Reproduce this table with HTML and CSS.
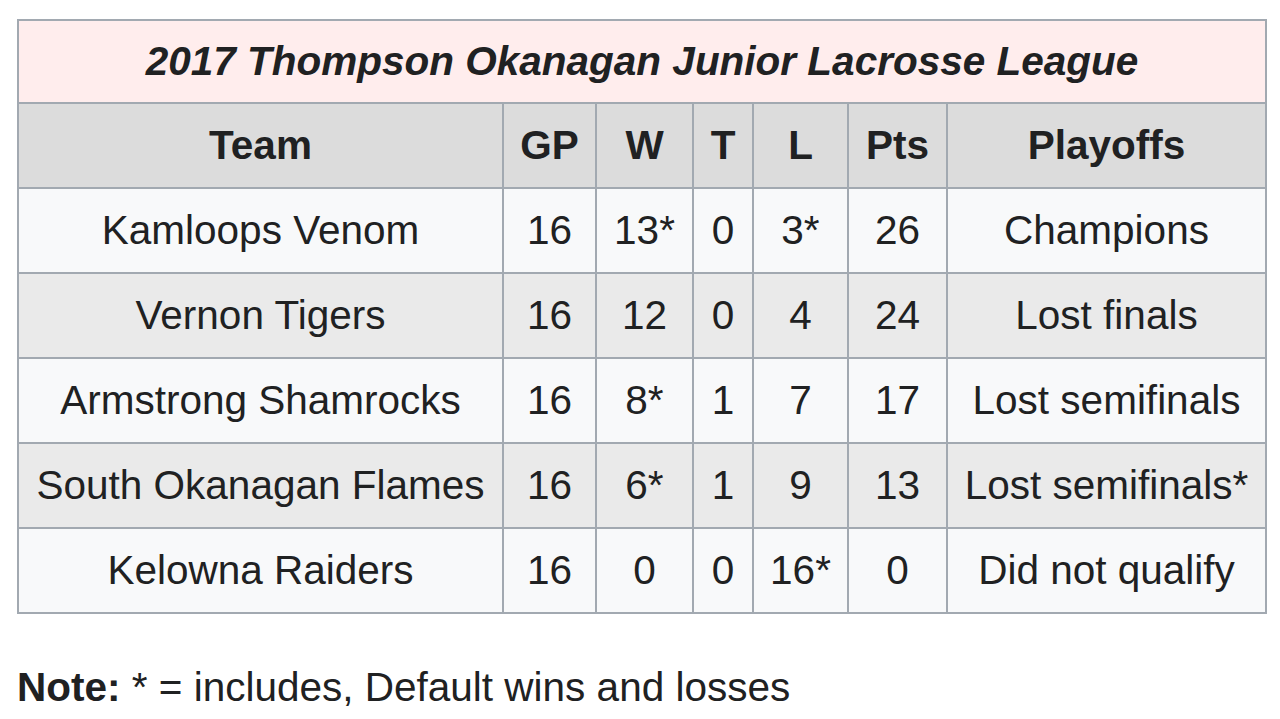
FILE: index.html
```html
<!DOCTYPE html>
<html lang="en">
<head>
  <meta charset="UTF-8" />
  <title>2017 Thompson Okanagan Junior Lacrosse League</title>
  <link rel="stylesheet" href="styles.css">
</head>
<body>
  <div class="page">
    <table class="standings">
      <colgroup>
        <col class="c-team">
        <col class="c-gp">
        <col class="c-w">
        <col class="c-t">
        <col class="c-l">
        <col class="c-pts">
        <col class="c-play">
      </colgroup>
      <tr class="title-row">
        <th colspan="7"><i>2017 Thompson Okanagan Junior Lacrosse League</i></th>
      </tr>
      <tr class="head-row">
        <th>Team</th>
        <th>GP</th>
        <th>W</th>
        <th>T</th>
        <th>L</th>
        <th>Pts</th>
        <th>Playoffs</th>
      </tr>
      <tr>
        <td>Kamloops Venom</td><td>16</td><td>13*</td><td>0</td><td>3*</td><td>26</td><td>Champions</td>
      </tr>
      <tr>
        <td>Vernon Tigers</td><td>16</td><td>12</td><td>0</td><td>4</td><td>24</td><td>Lost finals</td>
      </tr>
      <tr>
        <td>Armstrong Shamrocks</td><td>16</td><td>8*</td><td>1</td><td>7</td><td>17</td><td>Lost semifinals</td>
      </tr>
      <tr>
        <td>South Okanagan Flames</td><td>16</td><td>6*</td><td>1</td><td>9</td><td>13</td><td>Lost semifinals*</td>
      </tr>
      <tr>
        <td>Kelowna Raiders</td><td>16</td><td>0</td><td>0</td><td>16*</td><td>0</td><td>Did not qualify</td>
      </tr>
    </table>
    <p class="note"><b>Note:</b> * = includes, Default wins and losses</p>
  </div>
</body>
</html>
```

FILE: styles.css
```css
* { box-sizing: border-box; margin: 0; padding: 0; }
body {
  font-family: "Liberation Sans", Arial, sans-serif;
  color: #202122;
  background: #fff;
}

.page {
  padding: 19px 15px 0 17px;
}

.standings {
  table-layout: fixed;
  width: 1248px;
  border-collapse: collapse;
  font-size: 40.5px;
  text-align: center;
}

.c-team { width: 485px; }
.c-gp { width: 93px; }
.c-w { width: 97px; }
.c-t { width: 60px; }
.c-l { width: 95px; }
.c-pts { width: 99px; }
.c-play { width: 319px; }

.standings th,
.standings td {
  border: 2px solid #a2a9b1;
  height: 85px;
  padding: 0;
  white-space: nowrap;
}

.title-row th {
  background: #ffeded;
  height: 83px;
}

.head-row th {
  background: #dcdcdc;
}

.standings tr:nth-child(odd) td { background: #f8f9fa; }
.standings tr:nth-child(even) td { background: #eaeaea; }

.note {
  margin-top: 45px;
  font-size: 40.5px;
  line-height: 56px;
}
```
